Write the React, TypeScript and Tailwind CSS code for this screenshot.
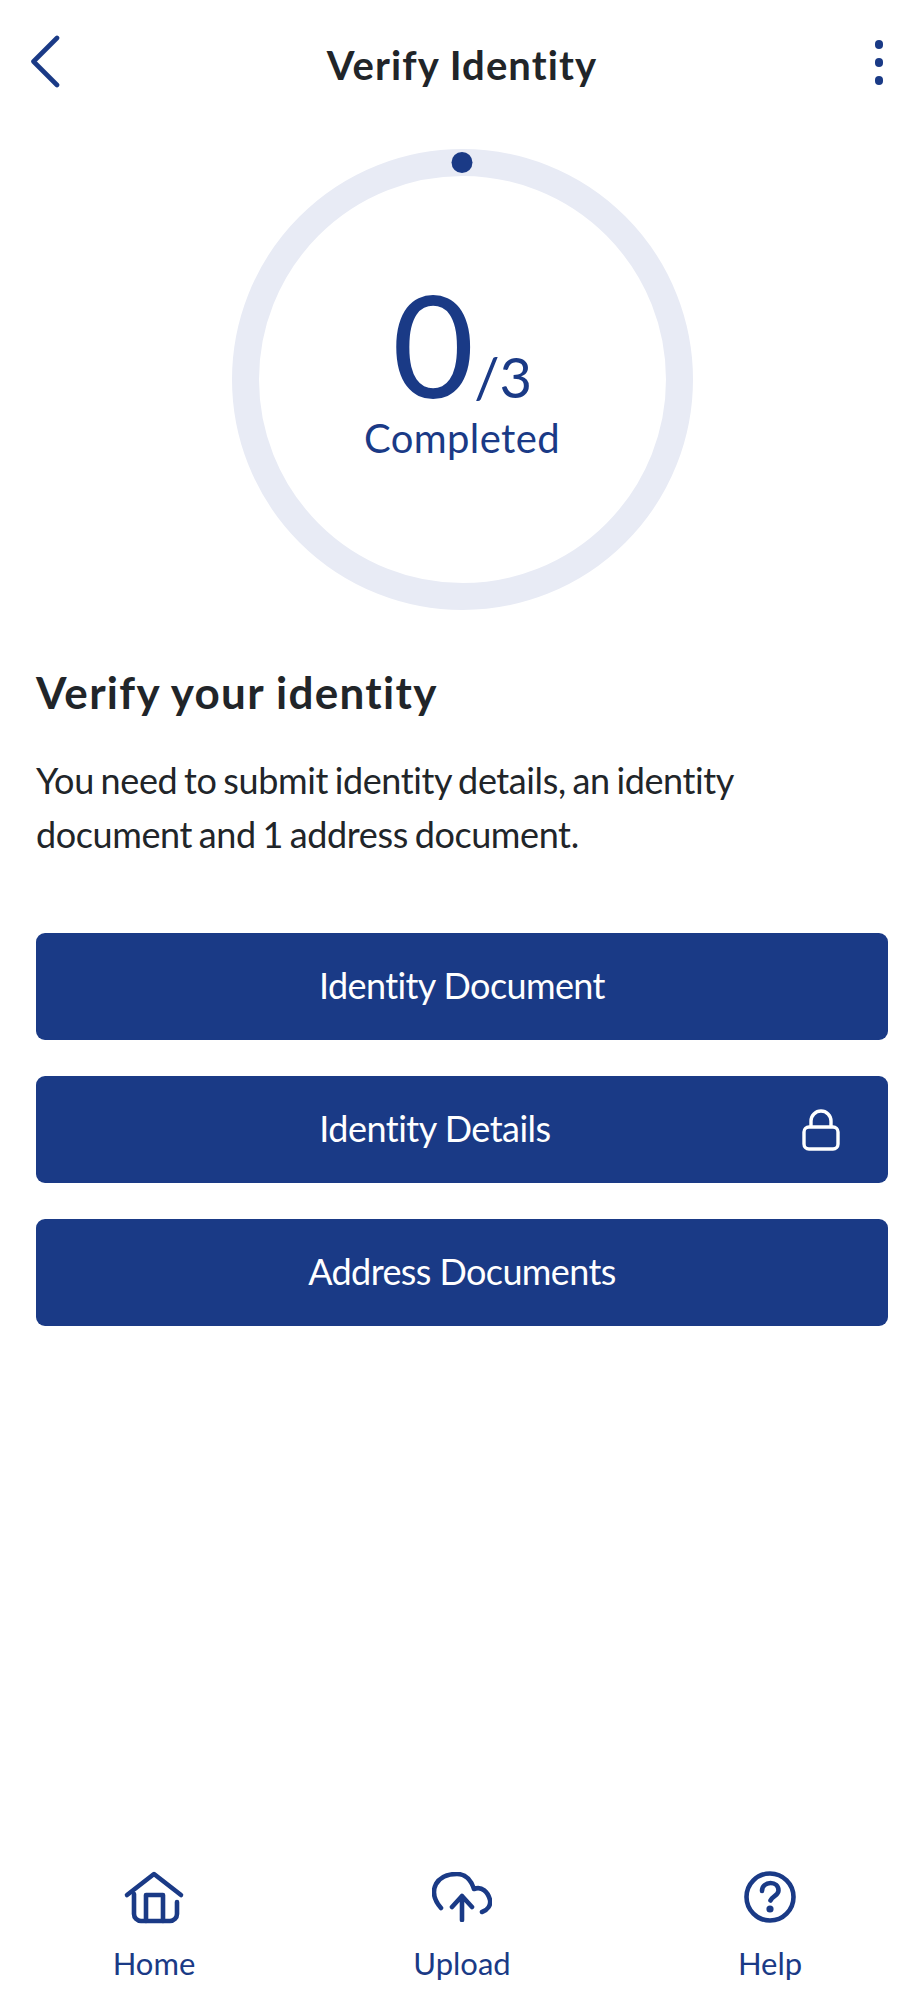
const NavItem = ({ label, children }: { label: string; children: React.ReactNode }) => (
  <div className="flex w-[308px] flex-col items-center">
    <div className="flex h-[64px] items-center justify-center">{children}</div>
    <span className="mt-[14px] text-[31px] leading-[40px] text-[#1a3a86]">{label}</span>
  </div>
);

const DocButton = ({ label }: { label: string }) => (
  <button className="flex h-[107px] w-full items-center justify-center rounded-[9px] bg-[#1a3a86] pb-[3px] text-[36px] tracking-[-0.6px] text-white">
    {label}
  </button>
);

const App = () => {
  return (
    <div className="flex h-[2000px] w-[924px] flex-col bg-white font-['Lato','Carlito','Open_Sans',sans-serif] text-[#212529]">
      {/* Header */}
      <header className="grid h-[149px] grid-cols-[1fr_auto_1fr] items-start px-[28px] pt-[34px]">
        <svg width="34" height="54" viewBox="0 0 34 54" fill="none" stroke="#1a3a86" strokeWidth="4.6" strokeLinecap="round" strokeLinejoin="round">
          <path d="M29 4 5.500 27.500 29 51" />
        </svg>
        <h1 className="mt-[9px] text-[40px] leading-[44px] font-bold tracking-[1.1px]">Verify Identity</h1>
        <div className="mt-[6px] flex flex-col items-end gap-[9px] pr-[13px]">
          <span className="block h-[9px] w-[8px] rounded-full bg-[#1a3a86]" />
          <span className="block h-[9px] w-[8px] rounded-full bg-[#1a3a86]" />
          <span className="block h-[9px] w-[8px] rounded-full bg-[#1a3a86]" />
        </div>
      </header>

      {/* Progress ring */}
      <div className="flex justify-center">
        <div className="relative flex h-[461px] w-[461px] flex-col items-center rounded-full border-[27px] border-[#e8ebf5] text-[#1a3a86]">
          <span className="absolute left-1/2 top-[-24px] h-[21px] w-[21px] -translate-x-1/2 rounded-full bg-[#1a3a86]" />
          <div className="mt-[95px] flex items-baseline">
            <span className="text-[142px] leading-[144px]">0</span>
            <span className="text-[56px] leading-[60px]">/3</span>
          </div>
          <span className="text-[40px] leading-[47px] tracking-[0.4px]">Completed</span>
        </div>
      </div>

      {/* Copy */}
      <section className="px-[36px]">
        <h2 className="mt-[55px] text-[44px] leading-[54px] font-bold tracking-[1.3px]">Verify your identity</h2>
        <p className="mt-[34px] text-[36px] leading-[54px] tracking-[-0.4px] [word-spacing:-2px]">
          You need to submit identity details, an identity
          <br />
          document and 1 address document.
        </p>

        <div className="mt-[72px] flex flex-col gap-[36px]">
          <DocButton label="Identity Document" />
          <button className="flex h-[107px] w-full items-center rounded-[9px] bg-[#1a3a86] pl-[32px] pr-[48px] text-[36px] tracking-[-0.5px] text-white">
            <span className="flex-1 pb-[3px] text-center">Identity Details</span>
            <svg width="38" height="42" viewBox="0 0 38 42" fill="none" stroke="white" strokeWidth="3.4" strokeLinejoin="round">
              <rect x="2" y="18" width="34" height="22" rx="5" />
              <path d="M9 18v-6a10 10 0 0 1 20 0v6" />
            </svg>
          </button>
          <DocButton label="Address Documents" />
        </div>
      </section>

      {/* Bottom nav */}
      <nav className="mt-auto flex pb-[17px]">
        <NavItem label="Home">
          <svg width="62" height="54" viewBox="0 0 62 54" fill="none" stroke="#1a3a86" strokeWidth="4.6" strokeLinecap="round" strokeLinejoin="round">
            <path d="M4 25 31 4 58 25" />
            <path d="M11 24v20a7 7 0 0 0 7 7h29a7 7 0 0 0 7-7V32" />
            <path d="M23 51V25h17v26" />
          </svg>
        </NavItem>
        <NavItem label="Upload">
          <svg width="60" height="50" viewBox="0 0 60 50" fill="none" stroke="#1a3a86" strokeWidth="4.6" strokeLinecap="round" strokeLinejoin="round">
            <path d="M9 36C2 28 0 20 4 12 8 5 15 2 25 2c8 0 14 6 17 15 8-3 14 3 16 11 1 5-2 10-8 12" />
            <path d="M30 48V24M20 35l10-11 10 11" />
          </svg>
        </NavItem>
        <NavItem label="Help">
          <svg width="52" height="52" viewBox="0 0 52 52" fill="none" stroke="#1a3a86" strokeWidth="4.6" strokeLinecap="round" strokeLinejoin="round">
            <circle cx="26" cy="26" r="23.500" />
            <path d="M18 20c0-5 4-8 8.500-8s8 3 8 7.500c0 5-6 5.500-8 10" />
            <circle cx="26" cy="38" r="1.300" fill="#1a3a86" />
          </svg>
        </NavItem>
      </nav>
    </div>
  );
};

export default App;
